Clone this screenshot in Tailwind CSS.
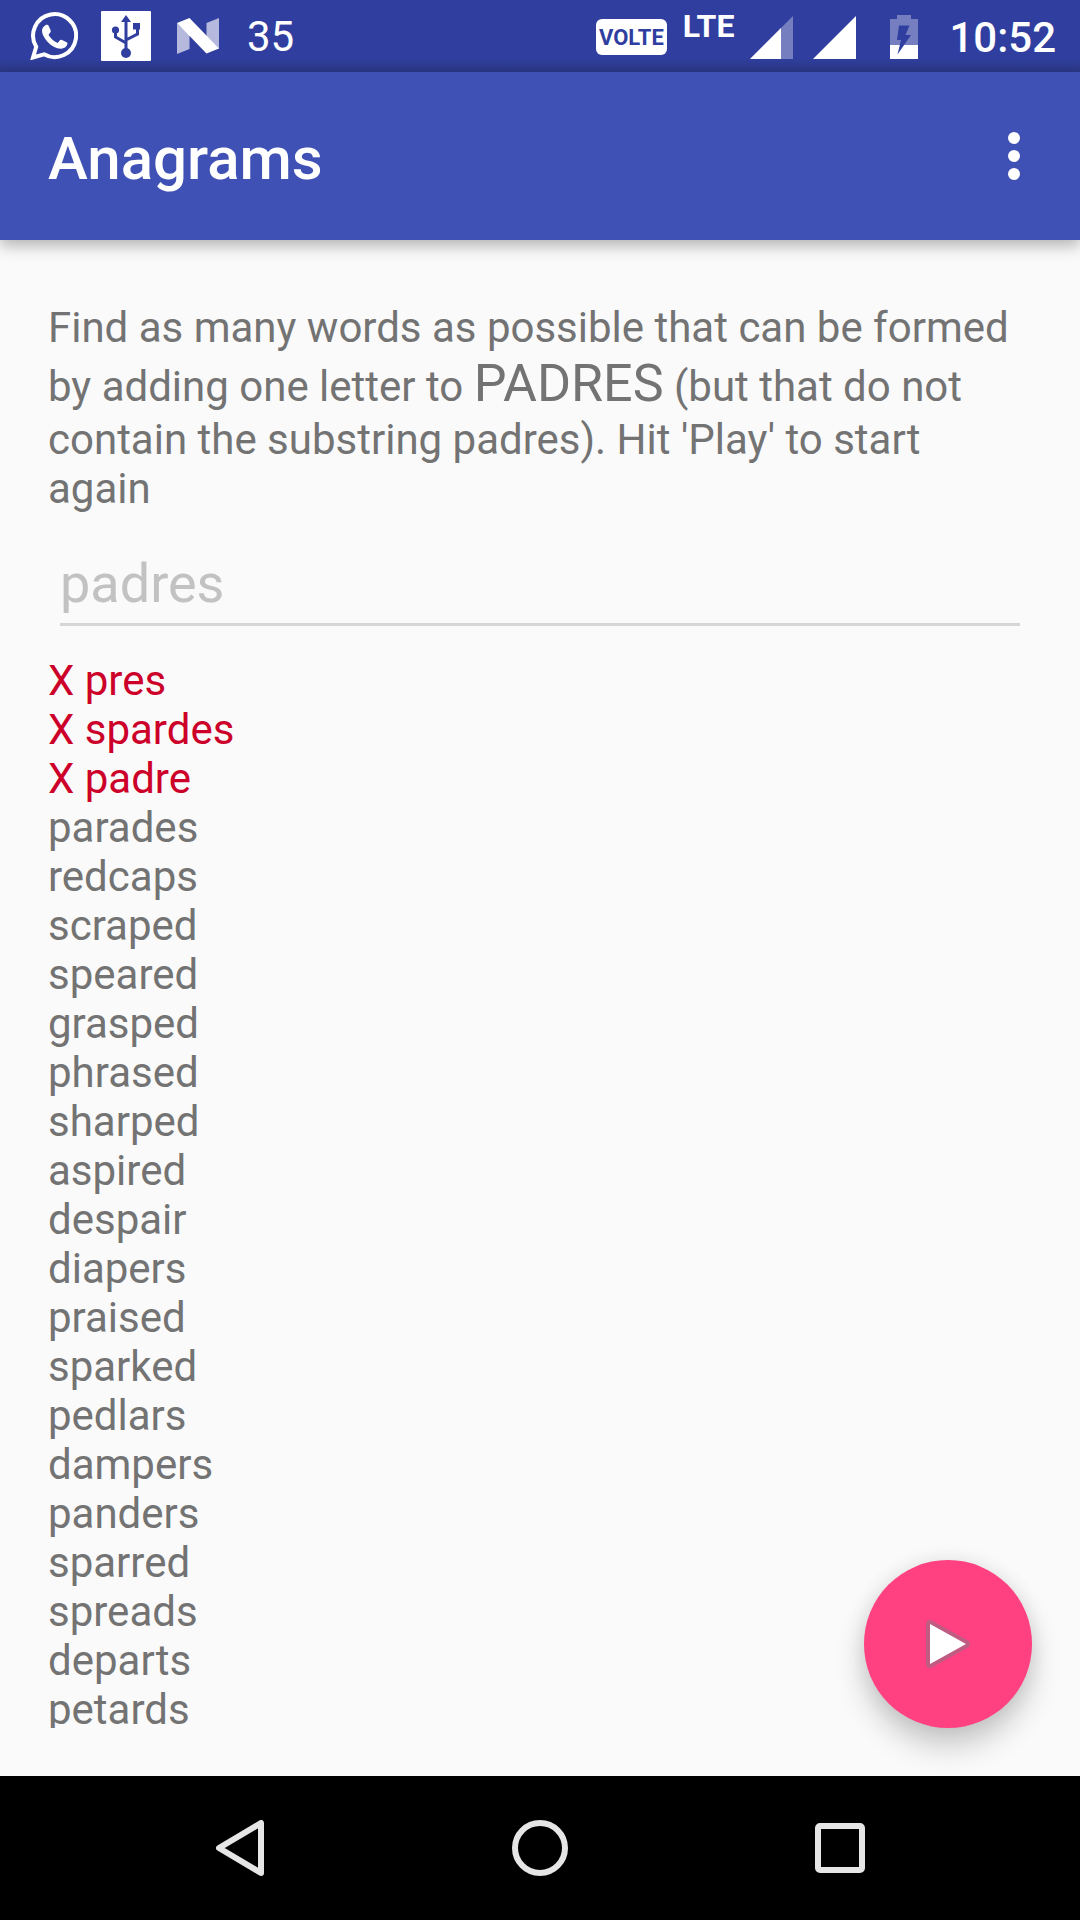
<!DOCTYPE html>
<html lang="en">
<head>
<meta charset="utf-8">
<meta name="viewport" content="width=device-width, initial-scale=1">
<title>Anagrams</title>
<script src="https://cdn.jsdelivr.net/npm/@tailwindcss/browser@4"></script>
</head>
<body class="flex h-screen flex-col bg-[#fafafa] font-[Roboto,sans-serif] text-[42px] leading-[49px] text-[#737373]">

<!-- Status bar -->
<div class="flex h-[72px] shrink-0 items-center justify-between bg-linear-to-b from-[#303f9f] from-80% to-[#2a3785] pr-6 pl-[30px] text-white">
  <div class="flex items-center">
    <svg class="h-12 w-12" viewBox="0 0 48 48" fill="none" aria-label="WhatsApp">
      <path d="M3 45.500 6.200 34.700A21.500 21.500 0 1 1 14 42.300Z" stroke="#fff" stroke-width="4"/>
      <path d="M15.500 13.200c.9-.6 2.600-.5 3.100.6l2.100 4.800c.3.800-.1 1.600-.7 2.300l-1.500 1.800c2.300 4 5.200 6.400 9.200 8.200l2.200-2.600c.6-.7 1.300-.8 2.100-.4l4.600 2.300c.8.400 1 1 .8 1.900-.7 3-3.700 4.700-6.600 4.600-4.600-.3-9.700-2.900-13.600-7.300-3-3.500-5.300-7-5.200-10.900.1-2.200 1.500-4.300 3.500-5.300Z" fill="#fff"/>
    </svg>
    <svg class="ml-[23px] h-[50px] w-[50px]" viewBox="0 0 50 50" aria-label="USB connected">
      <rect width="50" height="50" rx="1" fill="#fff"/>
      <g fill="#303f9f" stroke="none">
        <path d="m25 4 5 7H20Z"/><circle cx="25" cy="42" r="5"/><circle cx="14.500" cy="19" r="3.600"/><path d="M32 12h7v6.500h-7Z"/>
      </g>
      <path d="M25 9v31M14.500 20v6L25 32M36.500 17v6L25 29" fill="none" stroke="#303f9f" stroke-width="3"/>
    </svg>
    <svg class="ml-[26px] h-9 w-[42px]" viewBox="0 0 42 36" aria-label="Android Nougat">
      <path d="M0 5v31l12.500-5V16ZM42 0v31L29.500 19V5Z" fill="#b4b9dd"/>
      <path d="M0 5 12.500 0 42 30.500 29.500 35.500Z" fill="#fff"/>
    </svg>
    <span class="ml-7">35</span>
  </div>
  <div class="flex items-center pt-0.5">
    <span class="flex h-9 w-[71px] items-center justify-center rounded-md bg-white text-[22px] font-bold text-[#303f9f]">VOLTE</span>
    <span class="ml-4 pb-[22px] text-[32px] leading-8 font-bold">LTE</span>
    <svg class="ml-4 h-[43px] w-[43px]" viewBox="0 0 43 43" aria-label="Signal, SIM 1">
      <path d="M43 0v43H0Z" fill="#757fbf"/><path d="M31 12v31H0Z" fill="#fff"/>
    </svg>
    <svg class="ml-5 h-[43px] w-[43px]" viewBox="0 0 43 43" aria-label="Signal, SIM 2"><path d="M43 0v43H0Z" fill="#fff"/></svg>
    <svg class="ml-[34px] h-11 w-7" viewBox="0 0 28 44" aria-label="Battery charging">
      <path d="M7 0h14v4h7v26H0V4h7Z" fill="#757fbf"/><path d="M0 30h28v14H0Z" fill="#fff"/>
      <path d="M9 10.500h10.500L15.500 20H21L7.500 39.500 11 25H7Z" fill="#303f9f"/>
    </svg>
    <time class="ml-[31px] font-medium">10:52</time>
  </div>
</div>

<!-- App bar -->
<header class="relative flex h-[168px] shrink-0 items-center justify-between bg-[#3f51b5] pr-[30px] pl-12 text-white shadow-[0_6px_14px_rgba(0,0,0,0.28)]">
  <h1 class="pt-1.5 text-[60px] leading-[70px] font-medium">Anagrams</h1>
  <button type="button" aria-label="More options" class="flex h-24 w-[72px] flex-col items-center justify-center gap-[6px]">
    <span class="h-3 w-3 rounded-full bg-white"></span>
    <span class="h-3 w-3 rounded-full bg-white"></span>
    <span class="h-3 w-3 rounded-full bg-white"></span>
  </button>
</header>

<main class="relative flex min-h-0 flex-1 flex-col px-12 pt-[63px] pb-12">
  <label for="answer">Find as many words as possible that can be formed by adding one letter to <span class="text-[52px] leading-[63px]">PADRES</span> (but that do not contain the substring padres). Hit 'Play' to start again</label>
  <div class="mt-6 px-3">
    <input id="answer" type="text" placeholder="padres" class="block h-[89px] w-full border-b-[3px] border-[#d6d6d6] bg-transparent pt-1.5 text-[54px] outline-none placeholder:text-[#c2c2c2]">
  </div>
  <ul class="mt-[30px] min-h-0 flex-1 overflow-hidden">
    <li class="text-[#cc0029]">X pres</li>
    <li class="text-[#cc0029]">X spardes</li>
    <li class="text-[#cc0029]">X padre</li>
    <li>parades</li>
    <li>redcaps</li>
    <li>scraped</li>
    <li>speared</li>
    <li>grasped</li>
    <li>phrased</li>
    <li>sharped</li>
    <li>aspired</li>
    <li>despair</li>
    <li>diapers</li>
    <li>praised</li>
    <li>sparked</li>
    <li>pedlars</li>
    <li>dampers</li>
    <li>panders</li>
    <li>sparred</li>
    <li>spreads</li>
    <li>departs</li>
    <li>petards</li>
  </ul>
  <button type="button" aria-label="Play" class="absolute right-12 bottom-12 flex h-[168px] w-[168px] items-center justify-center rounded-full bg-[#ff4081] shadow-[0_18px_30px_rgba(0,0,0,0.2),0_0_20px_rgba(0,0,0,0.08)]">
    <svg class="h-12 w-11" viewBox="0 0 44 48" aria-hidden="true">
      <path d="M4 4v40L40 24Z" fill="#c05c82" stroke="#c05c82" stroke-width="8" stroke-linejoin="round"/>
      <path d="M4 4v40L40 24Z" fill="#fff"/>
    </svg>
  </button>
</main>

<!-- System navigation -->
<nav aria-label="System" class="flex h-36 shrink-0 items-center justify-center gap-[204px] bg-black">
  <button type="button" aria-label="Back" class="flex h-24 w-24 items-center justify-center">
    <svg class="h-14 w-12" viewBox="0 0 48 56" fill="none" stroke="#e6e6e6" stroke-width="6" stroke-linejoin="round"><path d="M45 3v50L3 28Z"/></svg>
  </button>
  <button type="button" aria-label="Home" class="flex h-24 w-24 items-center justify-center">
    <span class="h-14 w-14 rounded-full border-[6px] border-[#e6e6e6]"></span>
  </button>
  <button type="button" aria-label="Recent apps" class="flex h-24 w-24 items-center justify-center">
    <span class="h-[50px] w-[50px] rounded-[5px] border-[6px] border-[#e6e6e6]"></span>
  </button>
</nav>
</body>
</html>
